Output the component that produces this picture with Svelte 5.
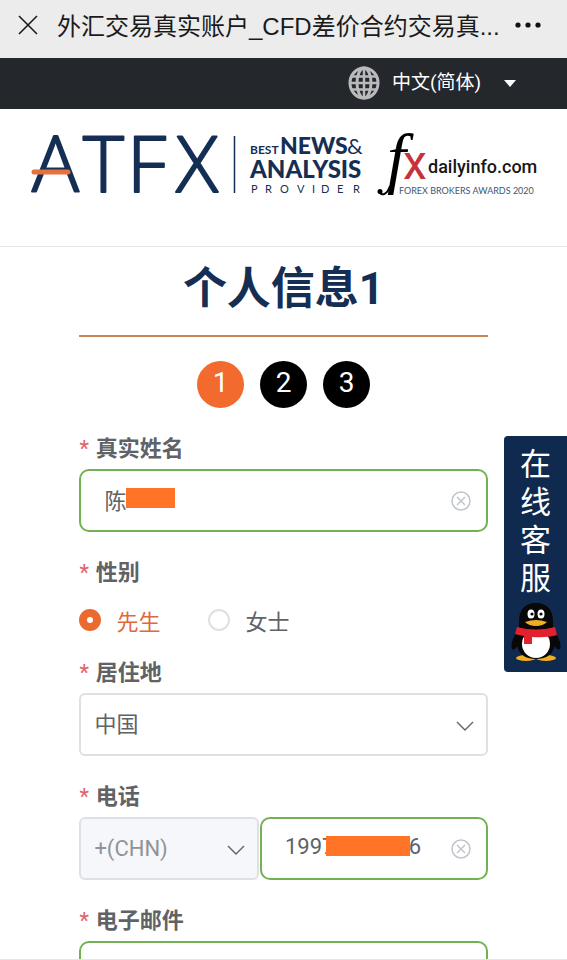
<script>
	const steps = [1, 2, 3];
	const currentStep = 1;
	let language = $state('zh-CN');
	let gender = $state('male');
	let country = $state('CN');
	let email = $state('');
	// The middle of the name and the number stays hidden
	let name = $state('陈');
	let phone = $state('1997' + '\u2007'.repeat(6) + '6');
</script>

{#snippet clearIcon()}
	<svg width="20" height="20" viewBox="0 0 20 20" fill="none" stroke="#c0c4cc" stroke-width="1.5">
		<circle cx="10" cy="10" r="9" />
		<path d="M6 6l8 8M14 6l-8 8" />
	</svg>
{/snippet}

{#snippet arrow()}
	<svg class="arrow" width="18" height="10" viewBox="0 0 18 10" fill="none" stroke="#606266" stroke-width="1.4">
		<path d="M1 1l8 8 8-8" />
	</svg>
{/snippet}

<div class="page">
	<div class="titlebar">
		<button class="plain" aria-label="关闭">
			<svg width="20" height="20" viewBox="0 0 20 20" stroke="#1a1a1a" stroke-width="1.6">
				<path d="M1 1l18 18M19 1L1 19" />
			</svg>
		</button>
		<div class="title">外汇交易真实账户_CFD差价合约交易真...</div>
		<button class="plain" aria-label="更多">
			<svg width="26" height="6" viewBox="0 0 26 6" fill="#111">
				<circle cx="3" cy="3" r="2.6" />
				<circle cx="13" cy="3" r="2.6" />
				<circle cx="23" cy="3" r="2.6" />
			</svg>
		</button>
	</div>

	<nav class="langbar">
		<svg width="32" height="34" viewBox="0 0 32 34" fill="none" stroke="#b9babb" stroke-width="3">
			<ellipse cx="16" cy="17" rx="14" ry="15" />
			<ellipse cx="16" cy="17" rx="7" ry="15" />
			<path d="M16 2v30M2 17h28M4 10.5h24M4 23.5h24" stroke-width="2.5" />
		</svg>
		<div class="lang">
			<select bind:value={language} aria-label="语言">
				<option value="zh-CN">中文(简体)</option>
			</select>
			<svg class="caret" width="12" height="7" viewBox="0 0 12 7" fill="#fff"><path d="M0 0h12L6 7z" /></svg>
		</div>
	</nav>

	<header>
		<svg class="logo" viewBox="0 0 567 137" role="img" aria-label="ATFX">
			<g fill="#152f54">
				<text class="brand" x="32 83 127 176" y="83">ATFX</text>
				<path d="M34 63h34" stroke="#e5713f" stroke-width="5" stroke-linecap="round" />
				<path d="M234.5 27v57" stroke="#152f54" stroke-width="1.5" />
				<g font-family="Lato, sans-serif">
					<text font-size="12" font-weight="700" x="250" y="45">BEST</text>
					<text font-size="23" font-weight="900" x="280" y="45">NEWS</text>
					<text font-size="22" x="347" y="45">&amp;</text>
					<text font-size="24" font-weight="900" x="250" y="69">ANALYSIS</text>
					<text font-size="11" x="251 265 280 297 312 321 337 353" y="84">PROVIDER</text>
				</g>
			</g>
			<text class="f" x="387" y="72">f</text>
			<path d="M390 77C387 86 382 87 379 83" fill="none" stroke="#000" stroke-width="2" />
			<circle cx="380" cy="82.5" r="2.5" />
			<text class="x" x="403" y="70">x</text>
			<text class="daily" x="428" y="64">dailyinfo.com</text>
			<text class="awards" x="399" y="85">FOREX BROKERS AWARDS 2020</text>
		</svg>
	</header>

	<main>
		<h1>个人信息1</h1>

		<ol class="steps">
			{#each steps as step}
				<li class:active={step === currentStep}>{step}</li>
			{/each}
		</ol>

		<form>
			<div class="item">
				<label for="name">真实姓名</label>
				<div class="control">
					<input id="name" class="valid" type="text" bind:value={name} />
					<span class="mask mask-name"></span>
					<button type="button" class="plain clear" aria-label="清除" onclick={() => (name = '')}>
						{@render clearIcon()}
					</button>
				</div>
			</div>

			<fieldset>
				<legend>性别</legend>
				<div class="radios">
					<label><input type="radio" name="gender" value="male" bind:group={gender} />先生</label>
					<label><input type="radio" name="gender" value="female" bind:group={gender} />女士</label>
				</div>
			</fieldset>

			<div class="item">
				<label for="country">居住地</label>
				<div class="control">
					<select id="country" bind:value={country}>
						<option value="CN">中国</option>
					</select>
					{@render arrow()}
				</div>
			</div>

			<div class="item">
				<label for="phone">电话</label>
				<div class="phone">
					<div class="control code">
						<select disabled aria-label="区号">
							<option>+(CHN)</option>
						</select>
						{@render arrow()}
					</div>
					<div class="control">
						<input id="phone" class="valid" type="tel" bind:value={phone} />
						<span class="mask mask-phone"></span>
						<button type="button" class="plain clear" aria-label="清除" onclick={() => (phone = '')}>
							{@render clearIcon()}
						</button>
					</div>
				</div>
			</div>

			<div class="item">
				<label for="email">电子邮件</label>
				<div class="control">
					<input id="email" class="valid" type="email" bind:value={email} />
				</div>
			</div>
		</form>
	</main>

	<button class="service">
		<span>在线客服</span>
		<svg width="50" height="60" viewBox="0 0 50 60">
			<path d="M8 27C3 33-1 42 1 47c2 2 5-2 7-5zM42 27c5 6 9 15 7 20-2 2-5-2-7-5z" fill="#080808" />
			<ellipse cx="15" cy="56" rx="10" ry="3" fill="#f0ae20" />
			<ellipse cx="35" cy="56" rx="10" ry="3" fill="#f0ae20" />
			<path d="M25 1C13 1 8 9 8 19v7c-5 16-2 31 17 31s22-15 17-31v-7C42 9 37 1 25 1z" fill="#080808" />
			<ellipse cx="25" cy="42" rx="14" ry="14" fill="#fff" />
			<ellipse cx="20" cy="12" rx="3.5" ry="4.5" fill="#fff" />
			<ellipse cx="30" cy="12" rx="3.5" ry="4.5" fill="#fff" />
			<circle cx="21" cy="12" r="1.6" fill="#080808" />
			<circle cx="30" cy="12" r="1.6" fill="#080808" />
			<path d="M14 20q11-4 22 0-4 4-11 4t-11-4z" fill="#f0ae20" />
			<path d="M6 25q19 5 38 0l2 8q-10 3-25 2v7h-8v-8q-6-1-9-2z" fill="#e3202e" />
		</svg>
	</button>
</div>

<style>
	:global(body) {
		background: #fff;
		font-family: Roboto, 'Noto Sans CJK SC', sans-serif;
		color: #606266;
	}
	* {
		box-sizing: border-box;
	}
	.page {
		height: 100vh;
		overflow: hidden;
		border-bottom: 1px solid #e6e6e6;
	}
	svg {
		display: block;
		flex: none;
	}
	input,
	select,
	button {
		font: inherit;
		color: inherit;
	}
	.plain {
		padding: 0;
		border: 0;
		background: none;
	}

	.titlebar {
		display: flex;
		align-items: center;
		height: 58px;
		padding: 0 26px 8px 18px;
		background: #ececec;
	}
	.title {
		flex: 1;
		margin-left: 19px;
		padding-top: 4px;
		overflow: hidden;
		white-space: nowrap;
		font-family: 'Liberation Sans', 'Noto Sans CJK SC', sans-serif;
		font-size: 24px;
		line-height: 36px;
		color: #1a1a1a;
	}

	.langbar {
		display: flex;
		align-items: center;
		justify-content: flex-end;
		gap: 12px;
		height: 51px;
		padding: 0 50px 2px 0;
		background: #24282c;
		color: #fff;
	}
	.lang {
		position: relative;
	}
	.lang select {
		display: block;
		width: 125px;
		height: 34px;
		padding: 0;
		border: 0;
		appearance: none;
		background: transparent;
		font-size: 19px;
	}
	.caret {
		position: absolute;
		right: 1px;
		top: 14px;
		pointer-events: none;
	}

	header {
		border-bottom: 1px solid #e8e8e8;
	}
	.logo {
		width: 100%;
	}
	.brand {
		font: 300 78px 'Open Sans', sans-serif;
		stroke: #152f54;
		stroke-width: 2px;
		stroke-linejoin: round;
	}
	.f {
		font: italic 68px 'Liberation Serif', serif;
	}
	.x {
		font: 400 48px Roboto, sans-serif;
		fill: #c8303a;
	}
	.daily {
		font: 500 18px Roboto, sans-serif;
		fill: #161616;
	}
	.awards {
		font: 9px Lato, sans-serif;
		fill: #3d566f;
	}

	main {
		padding: 0 14%;
	}
	h1 {
		margin: 0;
		padding: 10px 0 14px;
		border-bottom: 2px solid #cc8459;
		font-size: 44px;
		line-height: 64px;
		text-align: center;
		color: #152f54;
	}
	.steps {
		display: flex;
		justify-content: center;
		gap: 16px;
		margin: 24px 0 19px;
		padding: 0;
		list-style: none;
	}
	.steps li {
		width: 47px;
		height: 47px;
		border-radius: 50%;
		background: #000;
		color: #fff;
		font-size: 28px;
		line-height: 44px;
		text-align: center;
	}
	.steps .active {
		background: #f26a2e;
	}

	form {
		font-size: 22px;
	}
	.item {
		margin-bottom: 19px;
	}
	.item > label,
	legend {
		display: block;
		padding: 2px 0 0;
		font-weight: 700;
		line-height: 40px;
	}
	.item > label::before,
	legend::before {
		content: '*';
		margin-right: 7px;
		font-weight: 400;
		color: #e06464;
	}
	.control {
		position: relative;
		flex: 1;
	}
	.control input,
	.control select {
		display: block;
		width: 100%;
		height: 63px;
		border: 2px solid #dfe0e3;
		border-radius: 6px;
		background: #fff;
		appearance: none;
		outline: 0;
	}
	.control select {
		padding: 0 40px 0 13px;
	}
	.control input {
		padding: 0 50px 4px 23px;
	}
	.control .valid {
		border-color: #74b054;
		border-radius: 10px;
	}
	.control select:disabled {
		background: #f5f7fa;
		color: #909399;
		opacity: 1;
	}
	.arrow {
		position: absolute;
		right: 14px;
		top: 28px;
		pointer-events: none;
	}
	.clear {
		position: absolute;
		right: 17px;
		top: 22px;
	}
	.mask {
		position: absolute;
		top: 19px;
		height: 20px;
		background: #ff7426;
	}
	.mask-name {
		left: 47px;
		width: 49px;
	}
	.mask-phone {
		left: 66px;
		width: 84px;
	}

	fieldset {
		margin: 0;
		padding: 0;
		border: 0;
	}
	.radios {
		display: flex;
		gap: 48px;
		padding-bottom: 4px;
	}
	.radios label {
		display: flex;
		align-items: center;
		gap: 15px;
		height: 54px;
	}
	.radios label:has(:checked) {
		color: #e0683a;
	}
	.radios input {
		width: 22px;
		height: 22px;
		margin: 0;
		border: 2px solid #dfe0e3;
		border-radius: 50%;
		appearance: none;
	}
	.radios input:checked {
		border: 8px solid #ea6a30;
	}
	.phone {
		display: flex;
		gap: 1px;
	}
	.code {
		flex: 0 0 44%;
	}

	.service {
		position: fixed;
		right: 0;
		top: 436px;
		display: flex;
		flex-direction: column;
		align-items: center;
		width: 63px;
		height: 236px;
		padding: 10px 0;
		border: 0;
		border-radius: 4px 0 0 4px;
		background: #10294f;
		color: #fff;
		font-size: 31px;
		line-height: 38px;
	}
	.service span {
		width: 31px;
		margin-bottom: 4px;
		word-break: break-all;
	}
</style>
